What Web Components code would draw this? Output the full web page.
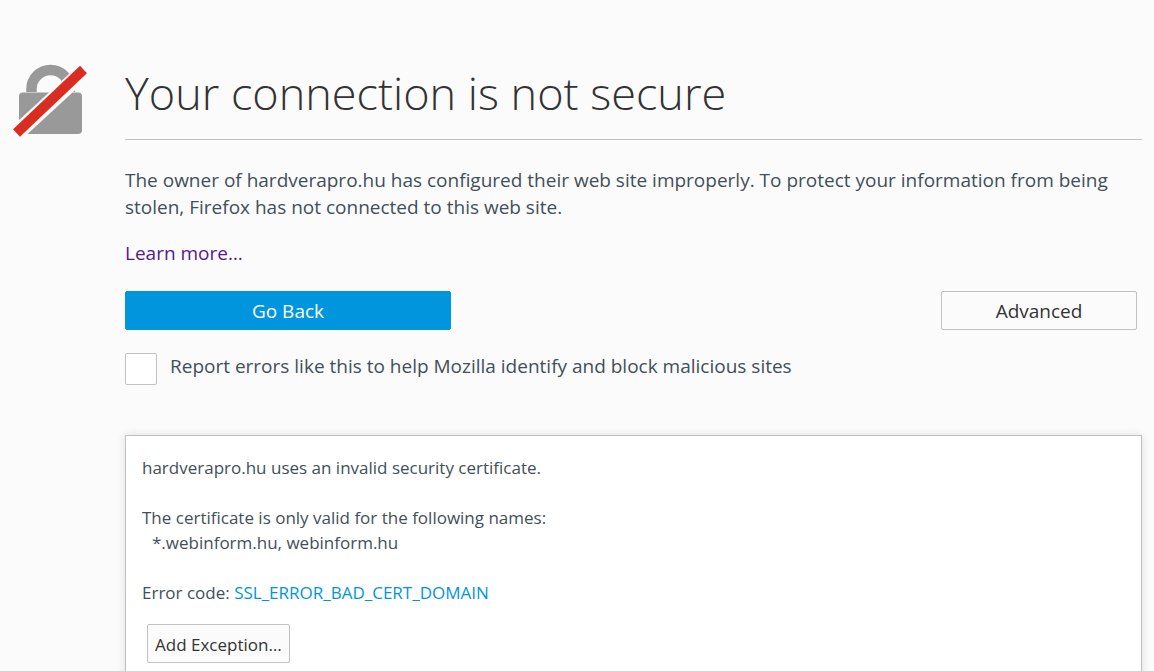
<!DOCTYPE html>
<html lang="en">
<head>
<meta charset="utf-8">
<meta name="viewport" content="width=device-width, initial-scale=1">
<title>Insecure Connection</title>
<style>
  html {
    --text: #424f5a;
    --heading: #333;
    --border: #c1c1c1;
    --surface: #fbfbfb;
    --primary: #0095dd;
  }
  body {
    margin: 0;
    background: var(--surface);
    color: var(--text);
    font: 19px/27px "Open Sans", "Noto Sans", sans-serif;
  }
</style>
</head>
<body>
<error-page>
  <insecure-icon slot="icon"></insecure-icon>
  <span slot="title">Your connection is not secure</span>
  <error-description></error-description>
  <error-actions></error-actions>
  <report-option>Report errors like this to help Mozilla identify and block malicious sites</report-option>
  <certificate-panel host="hardverapro.hu" code="SSL_ERROR_BAD_CERT_DOMAIN">*.webinform.hu, webinform.hu</certificate-panel>
</error-page>

<script>
class ErrorPage extends HTMLElement {
  connectedCallback() {
    this.attachShadow({ mode: 'open' }).innerHTML = `
      <style>
        :host {
          display: flex;
          gap: 36px;
          padding: 64px 12px 0 13px;
        }
        main { flex: 1; min-width: 0; }
        h1 {
          margin: 0 0 27px;
          padding-bottom: 17px;
          border-bottom: 1px solid var(--border);
          color: var(--heading);
          font-size: 45px;
          font-weight: 300;
          line-height: 58px;
        }
      </style>
      <slot name="icon"></slot>
      <main>
        <h1><slot name="title"></slot></h1>
        <slot></slot>
      </main>`;
  }
}

class InsecureIcon extends HTMLElement {
  connectedCallback() {
    this.attachShadow({ mode: 'open' }).innerHTML = `
      <style>
        :host { display: block; flex: none; }
        svg { display: block; }
      </style>
      <svg width="76" height="74" viewBox="0 0 76 74" role="img" aria-label="Insecure connection">
        <path d="M18.5 28V25a19 19 0 0 1 38 0v3" fill="none" stroke="#999" stroke-width="10.5"/>
        <rect x="6" y="28.5" width="63" height="41.5" rx="4" fill="#999"/>
        <path d="M5 68L72 6" stroke="#fbfbfb" stroke-width="16"/>
        <path d="M3.5 69L70.5 5.5" stroke="#d92d21" stroke-width="10"/>
      </svg>`;
  }
}

class ErrorDescription extends HTMLElement {
  connectedCallback() {
    this.attachShadow({ mode: 'open' }).innerHTML = `
      <style>
        :host { display: block; }
        p { margin: 0 0 19px; }
        a { color: #551a8b; text-decoration: none; }
        a:hover { text-decoration: underline; }
      </style>
      <p>The owner of hardverapro.hu has configured their web site improperly. To protect your information from being stolen, Firefox has not connected to this web site.</p>
      <p><a href="#learn-more">Learn more…</a></p>`;
  }
}

class ActionButton extends HTMLElement {
  connectedCallback() {
    this.attachShadow({ mode: 'open' }).innerHTML = `
      <style>
        :host { display: inline-block; }
        button {
          box-sizing: border-box;
          width: 100%;
          height: 39px;
          padding: 2px 7px 0;
          border: 1px solid var(--border);
          border-radius: 2px;
          background: var(--surface);
          color: var(--heading);
          font: inherit;
          cursor: pointer;
        }
        button:hover { background: #ebebeb; }
        :host([primary]) button {
          border-color: var(--primary);
          background: var(--primary);
          color: #fff;
        }
        :host([primary]) button:hover { background: #008acb; }
      </style>
      <button type="button"><slot></slot></button>`;
  }
}

class ErrorActions extends HTMLElement {
  connectedCallback() {
    this.attachShadow({ mode: 'open' }).innerHTML = `
      <style>
        :host {
          display: flex;
          justify-content: space-between;
          gap: 16px;
          padding: 5px 5px 0 0;
        }
        .back { flex: 0 1 326px; }
        .advanced { flex: 0 1 196px; }
      </style>
      <action-button class="back" primary>Go Back</action-button>
      <action-button class="advanced">Advanced</action-button>`;
    this.shadowRoot.querySelector('.back').addEventListener('click', () => history.back());
    this.shadowRoot.querySelector('.advanced').addEventListener('click', () => {
      const panel = document.querySelector('certificate-panel');
      panel.hidden = !panel.hidden;
    });
  }
}

class ReportOption extends HTMLElement {
  connectedCallback() {
    this.attachShadow({ mode: 'open' }).innerHTML = `
      <style>
        :host { display: block; margin-top: 23px; }
        label { display: flex; gap: 13px; }
        input {
          appearance: none;
          box-sizing: border-box;
          flex: none;
          width: 32px;
          height: 32px;
          margin: 0;
          border: 1px solid var(--border);
          border-radius: 2px;
          background: #fff;
        }
        input:checked { background: var(--primary); box-shadow: inset 0 0 0 6px #fff; }
      </style>
      <label><input type="checkbox"><span><slot></slot></span></label>`;
  }
}

class CertificatePanel extends HTMLElement {
  connectedCallback() {
    const host = this.getAttribute('host');
    const code = this.getAttribute('code');
    this.attachShadow({ mode: 'open' }).innerHTML = `
      <style>
        :host {
          display: block;
          margin-top: 50px;
          padding: 19px 16px 24px;
          border: 1px solid var(--border);
          background: #fff;
          box-shadow: 0 0 8px #ddd;
          font-size: 17px;
          line-height: 25px;
        }
        :host([hidden]) { display: none; }
        p { margin: 0 0 25px; }
        .names { display: block; padding-left: 10px; }
        .code { margin-bottom: 19px; }
        a { color: var(--primary); text-decoration: none; }
        action-button { margin-left: 5px; }
      </style>
      <p>${host} uses an invalid security certificate.</p>
      <p>The certificate is only valid for the following names: <span class="names"><slot></slot></span></p>
      <p class="code">Error code: <a href="#certificate">${code}</a></p>
      <action-button>Add Exception…</action-button>`;
  }
}

customElements.define('error-page', ErrorPage);
customElements.define('insecure-icon', InsecureIcon);
customElements.define('error-description', ErrorDescription);
customElements.define('action-button', ActionButton);
customElements.define('error-actions', ErrorActions);
customElements.define('report-option', ReportOption);
customElements.define('certificate-panel', CertificatePanel);
</script>
</body>
</html>
